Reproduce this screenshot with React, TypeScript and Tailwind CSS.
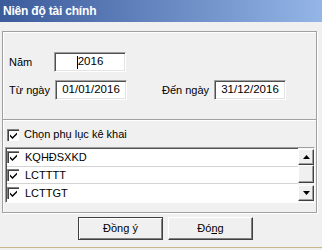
import React from "react";

function Check() {
  return (
    <span className="inline-flex w-[12px] h-[12px] shrink-0 bg-white border-t border-l border-[#808080] border-b-white border-r-white shadow-[inset_1px_1px_0_#404040] items-center justify-center">
      <svg width="9" height="9" viewBox="0 0 9 9">
        <path d="M1 3.5 L3.5 6 L8 1.5 L8 3.5 L3.5 8 L1 5.5 Z" fill="#000" />
      </svg>
    </span>
  );
}

function Field({ value, caret }: { value: string; caret?: boolean }) {
  return (
    <div className="w-[72px] h-[20px] bg-white text-[11.5px] border border-t-[#a0a0a0] border-l-[#a0a0a0] border-b-white border-r-white shadow-[inset_1px_1px_0_#505050,inset_-1px_-1px_0_#e3e3e3] flex items-center justify-center">
      {caret && <span className="w-px h-[13px] bg-black" />}
      <span>{value}</span>
    </div>
  );
}

function Row({ label }: { label: string }) {
  return (
    <div className="h-[18px] border-b border-[#d4d4d4] flex items-center gap-[6px] last:border-b-0">
      <Check />
      <span>{label}</span>
    </div>
  );
}

function Btn({ children, def }: { children: React.ReactNode; def?: boolean }) {
  return (
    <div
      className={
        "w-[85px] h-[23px] flex items-center justify-center bg-[#f0f0f0] " +
        (def
          ? "border border-[#404040] shadow-[inset_1px_1px_0_#fff,inset_-1px_-1px_0_#808080]"
          : "border border-t-white border-l-white border-b-[#404040] border-r-[#404040] shadow-[inset_-1px_-1px_0_#808080]")
      }
    >
      {children}
    </div>
  );
}

export default function App() {
  return (
    <div className="w-[322px] h-[250px] bg-[#f0f0f0] text-[11px] leading-none text-black overflow-hidden flex flex-col font-['Liberation_Sans',Arial,sans-serif]">
      <div className="h-[22px] shrink-0 bg-linear-to-r from-[#3b5b9b] to-[#94b5e6] text-white text-[12px] tracking-[-0.2px] font-bold pl-[3px] flex items-center">
        Niên độ tài chính
      </div>
      <div className="pl-[2px] pt-[9px]">
        <div className="w-[315px] h-[182px] border border-[#a0a0a0] shadow-[inset_1px_1px_0_#fff,1px_1px_0_#fff] flex flex-col">
          <div className="h-[87px] shrink-0 pt-[20px] pl-[6px] flex flex-col gap-[8px]">
            <div className="flex items-center">
              <span className="w-[45px]">Năm</span>
              <Field value="2016" caret />
            </div>
            <div className="flex items-center">
              <span className="w-[46px]">Từ ngày</span>
              <Field value="01/01/2016" />
              <span className="w-[52px] ml-[35px]">Đến ngày</span>
              <Field value="31/12/2016" />
            </div>
          </div>
          <div className="h-px bg-[#a0a0a0] shadow-[0_1px_0_#fff]" />
          <div className="flex items-center gap-[5px] pl-[4px] mt-[8px] h-[13px]">
            <Check />
            <span>Chọn phụ lục kê khai</span>
          </div>
          <div className="ml-[2px] mr-[1px] mt-[6px] h-[56px] bg-white border border-t-[#a0a0a0] border-l-[#a0a0a0] border-b-white border-r-white shadow-[inset_1px_1px_0_#505050] flex">
            <div className="flex-1 flex flex-col pt-px pl-[1px]">
              <Row label="KQHĐSXKD" />
              <Row label="LCTTTT" />
              <Row label="LCTTGT" />
            </div>
            <div className="w-[16px] pt-px pb-[1px] flex flex-col bg-[#f4f4f4]">
              <div className="h-[16px] bg-[#f0f0f0] border border-t-white border-l-white border-b-[#404040] border-r-[#404040] shadow-[inset_-1px_-1px_0_#a0a0a0] flex items-center justify-center">
                <svg width="7" height="4" viewBox="0 0 7 4"><path d="M3.5 0 L7 4 L0 4 Z" fill="#000" /></svg>
              </div>
              <div className="h-[18px] bg-[#f0f0f0] border border-t-white border-l-white border-b-[#404040] border-r-[#404040] shadow-[inset_-1px_-1px_0_#a0a0a0]" />
              <div className="flex-1" />
              <div className="h-[16px] bg-[#f0f0f0] border border-t-white border-l-white border-b-[#404040] border-r-[#404040] shadow-[inset_-1px_-1px_0_#a0a0a0] flex items-center justify-center">
                <svg width="7" height="4" viewBox="0 0 7 4"><path d="M0 0 L7 0 L3.5 4 Z" fill="#000" /></svg>
              </div>
            </div>
          </div>
        </div>
      </div>
      <div className="flex gap-[5px] pl-[78px] mt-[4px]">
        <Btn def>Đồng ý</Btn>
        <Btn>
          Đó<span className="underline">ng</span>
        </Btn>
      </div>
      <div className="flex-1" />
      <div className="h-px bg-[#c8b890] mb-[2px]" />
    </div>
  );
}
